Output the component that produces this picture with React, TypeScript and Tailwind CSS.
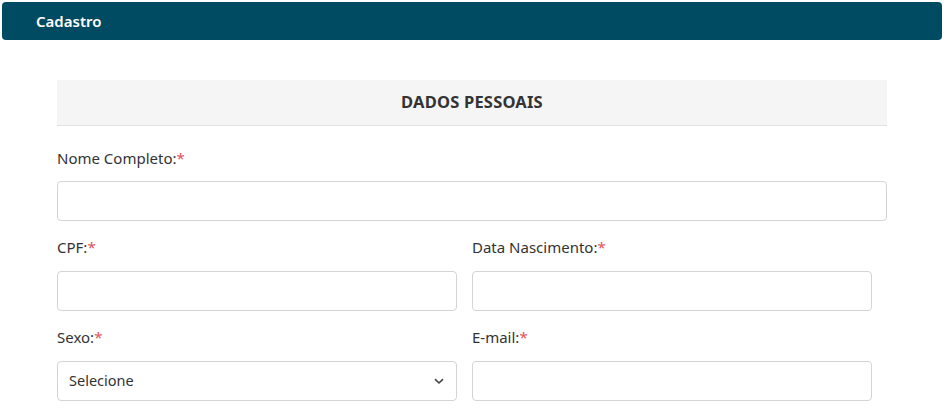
import React from "react";

const Label = ({ text }: { text: string }) => (
  <label className="block h-[24px] leading-[24px] text-[15px] text-[#333333]">
    {text}
    <span className="text-[#e4505a]">*</span>
  </label>
);

const Input = () => (
  <input
    type="text"
    className="block w-full h-[40px] rounded-[4px] border border-[#d4d4d4] bg-white outline-none"
  />
);

export default function App() {
  return (
    <div className="w-[944px] h-[408px] bg-white overflow-hidden font-['Noto_Sans',sans-serif]">
      <div className="mx-[2px] mt-[2px] h-[38px] rounded-[4px] bg-[#004a62] flex items-center pl-[34px]">
        <span className="text-white text-[15px] font-semibold">Cadastro</span>
      </div>
      <div className="ml-[57px] w-[830px] mt-[40px]">
        <div className="h-[46px] bg-[#f5f5f5] border-b border-[#e3e3e3] flex items-center justify-center">
          <span className="text-[16.5px] font-bold text-[#333333] tracking-[0.2px]">DADOS PESSOAIS</span>
        </div>
        <div className="pt-[20px]">
          <Label text="Nome Completo:" />
          <div className="mt-[11px]">
            <Input />
          </div>
        </div>
        <div className="flex gap-[15px] mt-[14px] w-[815px]">
          <div className="w-[400px]">
            <Label text="CPF:" />
            <div className="mt-[12px]">
              <Input />
            </div>
          </div>
          <div className="w-[400px]">
            <Label text="Data Nascimento:" />
            <div className="mt-[12px]">
              <Input />
            </div>
          </div>
        </div>
        <div className="flex gap-[15px] mt-[14px] w-[815px]">
          <div className="w-[400px]">
            <Label text="Sexo:" />
            <div className="mt-[12px] relative">
              <div className="w-full h-[40px] rounded-[4px] border border-[#d4d4d4] bg-white flex items-center justify-between pl-[11px] pr-[12px]">
                <span className="text-[14.5px] text-[#333333]">Selecione</span>
                <svg width="10" height="7" viewBox="0 0 10 7" fill="none">
                  <path d="M1.5 1.6 L5 5 L8.5 1.6" stroke="#444" strokeWidth="1.6" strokeLinecap="round" strokeLinejoin="round" />
                </svg>
              </div>
            </div>
          </div>
          <div className="w-[400px]">
            <Label text="E-mail:" />
            <div className="mt-[12px]">
              <Input />
            </div>
          </div>
        </div>
      </div>
    </div>
  );
}
